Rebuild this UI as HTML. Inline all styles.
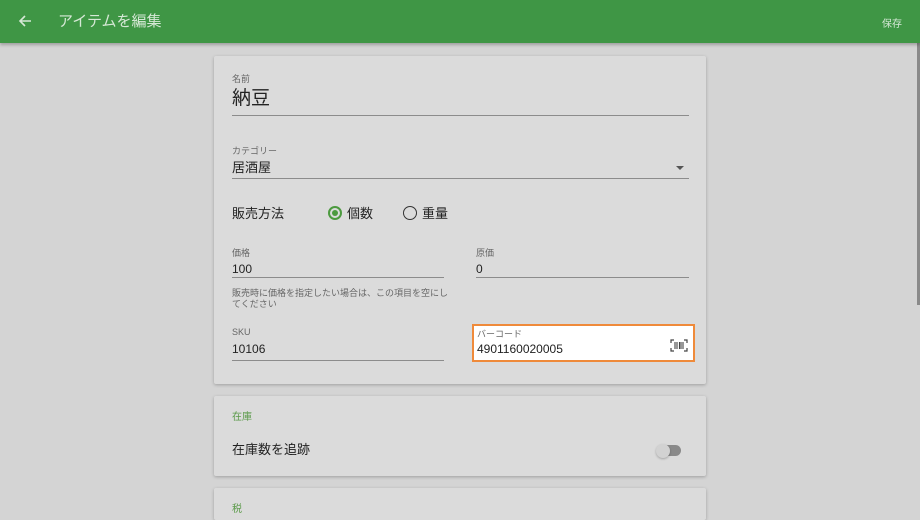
<!DOCTYPE html>
<html><head><meta charset="utf-8"><style>
*{box-sizing:border-box;margin:0;padding:0}
html,body{width:920px;height:520px;overflow:hidden}
body{background:#d4d4d4;font-family:"Liberation Sans","Noto Sans CJK JP",sans-serif;position:relative;color:#222}
.hdr{position:absolute;left:0;top:0;width:920px;height:43px;background:#3f9645;box-shadow:0 2px 3px rgba(0,0,0,.25);color:#d6e8d6;z-index:2}
.hdr .t{position:absolute;left:58px;top:10px;font-size:15px}
.hdr .s{position:absolute;right:18px;top:15px;font-size:10px}
.hdr svg{position:absolute;left:17px;top:13px}
.sb{position:absolute;right:0;top:43px;width:3px;height:262px;background:#8a8a8a}
.card{position:absolute;left:214px;width:492px;background:#dbdbdb;box-shadow:0 1px 3px rgba(0,0,0,.25);border-radius:2px}
.a{position:absolute}
.lbl{font-size:9px;color:#666}
.line{position:absolute;height:1px;background:#8c8c8c}
</style></head><body>
<div class="hdr">
<svg width="16" height="16" viewBox="0 0 16 16"><path d="M14 8H3M8 3L3 8l5 5" stroke="#d6e8d6" stroke-width="1.6" fill="none"/></svg>
<div class="t">アイテムを編集</div><div class="s">保存</div></div>
<div class="sb"></div>
<div class="card" style="top:56px;height:328px">
<div class="a lbl" style="left:18px;top:16px">名前</div>
<div class="a" style="left:18px;top:33px;font-size:19px;line-height:1;color:#222">納豆</div>
<div class="line" style="left:18px;top:59px;width:457px"></div>
<div class="a lbl" style="left:18px;top:88px">カテゴリー</div>
<div class="a" style="left:18px;top:105px;font-size:13px;line-height:1">居酒屋</div>
<div class="a" style="left:462px;top:110px;width:0;height:0;border-left:4px solid transparent;border-right:4px solid transparent;border-top:4px solid #555"></div>
<div class="line" style="left:18px;top:122px;width:457px"></div>
<div class="a" style="left:18px;top:151px;font-size:13px;line-height:1">販売方法</div>
<div class="a" style="left:114px;top:150px;width:14px;height:14px;border:2px solid #4c9a3f;border-radius:50%"><div style="position:absolute;left:2px;top:2px;width:6px;height:6px;border-radius:50%;background:#4c9a3f"></div></div>
<div class="a" style="left:133px;top:151px;font-size:13px;line-height:1">個数</div>
<div class="a" style="left:189px;top:150px;width:14px;height:14px;border:1.5px solid #333;border-radius:50%"></div>
<div class="a" style="left:208px;top:151px;font-size:13px;line-height:1">重量</div>
<div class="a lbl" style="left:18px;top:190px">価格</div>
<div class="a" style="left:18px;top:206px;font-size:12px">100</div>
<div class="line" style="left:18px;top:221px;width:212px"></div>
<div class="a lbl" style="left:262px;top:190px">原価</div>
<div class="a" style="left:262px;top:206px;font-size:12px">0</div>
<div class="line" style="left:262px;top:221px;width:213px"></div>
<div class="a lbl" style="left:18px;top:232px;line-height:11px;width:220px">販売時に価格を指定したい場合は、この項目を空にしてください</div>
<div class="a lbl" style="left:18px;top:271px">SKU</div>
<div class="a" style="left:18px;top:286px;font-size:12px">10106</div>
<div class="line" style="left:18px;top:304px;width:212px"></div>
<div class="a" style="left:258px;top:268px;width:223px;height:38px;background:#fff;border:2px solid #ef8a3a">
<div class="a lbl" style="left:3px;top:1px">バーコード</div>
<div class="a" style="left:3px;top:16px;font-size:12px">4901160020005</div>
<svg class="a" style="left:196px;top:13px" width="18" height="13" viewBox="0 0 18 13"><path d="M1 4V1h3M14 1h3v3M17 9v3h-3M4 12H1V9" stroke="#444" stroke-width="1.2" fill="none"/><path d="M5 3v7M7 3v7M9.5 3v7M11 3v7M13 3v7" stroke="#444" stroke-width="1.1"/></svg>
</div>
</div>
<div class="card" style="top:396px;height:80px">
<div class="a" style="left:18px;top:12px;font-size:10px;color:#5a9a48">在庫</div>
<div class="a" style="left:18px;top:47px;font-size:13px;line-height:1">在庫数を追跡</div>
<div class="a" style="left:446px;top:49px;width:21px;height:11px;border-radius:6px;background:#8a8a8a"></div>
<div class="a" style="left:442px;top:48px;width:14px;height:14px;border-radius:50%;background:#d2d2d2;box-shadow:0 1px 2px rgba(0,0,0,.25)"></div>
</div>
<div class="card" style="top:488px;height:32px">
<div class="a" style="left:18px;top:12px;font-size:10px;color:#5a9a48">税</div>
</div>
</body></html>
